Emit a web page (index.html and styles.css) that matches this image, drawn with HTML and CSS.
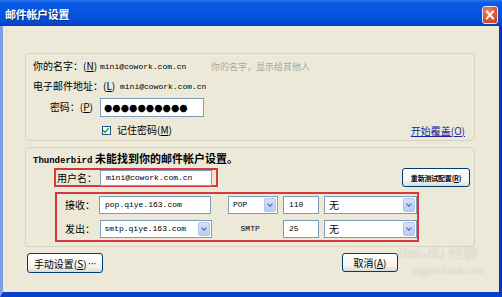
FILE: index.html
```html
<!DOCTYPE html>
<html>
<head>
<meta charset="utf-8">
<link rel="stylesheet" href="styles.css">
</head>
<body>
<div class="win">
  <div class="titlebar">
    <span class="title">邮件帐户设置</span>
    <span class="close"><svg width="15" height="18" viewBox="0 0 15 18"><path d="M4 5 L11 13 M11 5 L4 13" stroke="#fff" stroke-width="2" stroke-linecap="round"/></svg></span>
  </div>
  <div class="frame">
    <div class="client">
      <div class="group g1">
        <div class="row r1">
          <span class="lbl w67">你的名字：(<u>N</u>)</span>
          <span class="val w111">mini@cowork.com.cn</span>
          <span class="hint">你的名字，显示给其他人</span>
        </div>
        <div class="row r2">
          <span class="lbl w87">电子邮件地址：(<u>L</u>)</span>
          <span class="val">mini@cowork.com.cn</span>
        </div>
        <div class="row r3">
          <span class="lbl w60 right">密码：(<u>P</u>)</span>
          <span class="input pw">●●●●●●●●●●</span>
        </div>
        <div class="row r4">
          <span class="check"><svg width="9" height="9" viewBox="0 0 9 9"><path d="M1.5 4.5 L3.5 6.5 L7.5 2" stroke="#21a121" stroke-width="1.6" fill="none"/></svg></span>
          <span class="lbl">记住密码(<u>M</u>)</span>
          <a class="link">开始覆盖(<u>O</u>)</a>
        </div>
      </div>
      <div class="group g2">
        <div class="msg"><span class="mono">Thunderbird</span> 未能找到你的邮件帐户设置。</div>
        <div class="row r-user">
          <div class="redbox user">
            <span class="lbl w43">用户名：</span>
            <span class="input val w112">mini@cowork.com.cn</span>
          </div>
          <span class="btn retest">重新测试配置(<u>R</u>)</span>
        </div>
        <div class="redbox servers">
          <div class="srow">
            <span class="lbl w35">接收：</span>
            <span class="input val w112">pop.qiye.163.com</span>
            <span class="select val w50 ml17">POP<i class="arr"></i></span>
            <span class="input val w36 ml5">110</span>
            <span class="select w93 ml5">无<i class="arr"></i></span>
          </div>
          <div class="srow">
            <span class="lbl w35">发出：</span>
            <span class="select val w112">smtp.qiye.163.com<i class="arr"></i></span>
            <span class="val smtp">SMTP</span>
            <span class="input val w36">25</span>
            <span class="select w93 ml5">无<i class="arr"></i></span>
          </div>
        </div>
      </div>
      <div class="bottom">
        <span class="btn manual">手动设置(<u>S</u>)<span class="dots">···</span></span>
        <span class="btn cancel">取消(<u>A</u>)</span>
      </div>
    </div>
  </div>
  <div class="watermark"><span class="wm1">Bai<span class="paw">●</span>du 经验</span><span class="wm2">jingyan.baidu.com</span></div>
</div>
</body>
</html>
```
FILE: styles.css
```css
* { box-sizing: border-box; }
html, body { margin: 0; padding: 0; }
body { width: 502px; height: 297px; overflow: hidden; background: #0a3fcf; }
.win { position: relative; width: 502px; height: 297px; font-family: "Noto Sans CJK SC", "Liberation Sans", sans-serif; font-size: 10px; color: #000; }
.titlebar {
  height: 26px; display: flex; align-items: center; justify-content: space-between;
  background: linear-gradient(#2d78ef 0, #0a5ae6 3px, #0556e4 40%, #0450dc 75%, #0545cb 92%, #0a3ab8 100%);
  padding: 0 4px 0 5px;
}
.title { color: #fff; font-weight: bold; font-size: 11px; letter-spacing: -0.3px; text-shadow: 1px 1px 0 #0a2a8a; margin-top: 1px; }
.close {
  width: 16px; height: 18px; margin-top: 4px; border: 1px solid #e8e8f8; border-radius: 3px;
  background: radial-gradient(circle at 40% 30%, #f08a6a, #d8502c 60%, #c8401c);
  display: flex; align-items: center; justify-content: center;
}
.close svg { display: block; }
.frame { height: 271px; border-left: 3px solid #7d9fe6; border-right: 3px solid #0833c6; border-bottom: 5px solid #0a3fd0; background: #ece9d8; }
.client { height: 266px; padding: 27px 0 0 22px; }
.group { width: 450px; border: 1px solid #d6d3c2; border-radius: 4px; }
.g1 { height: 88px; padding: 3px 9px 0 7px; }
.g2 { height: 100px; margin-top: 6px; padding: 3px 4px 0 7px; }
.row { display: flex; align-items: center; }
.r1 { height: 18px; }
.r2 { height: 18px; margin-top: 2px; }
.r3 { height: 20px; margin-top: 2px; }
.r4 { height: 12px; margin-top: 7px; }
.lbl { white-space: nowrap; font-size: 10px; line-height: 12px; }
.lbl u, .link u, .btn u { text-decoration: underline; }
.right { text-align: right; }
.w67 { width: 67px; } .w87 { width: 87px; } .w60 { width: 60px; } .w43 { width: 43px; } .w35 { width: 35px; }
.w111 { width: 111px; } .w112 { width: 112px; } .w50 { width: 50px; } .w36 { width: 36px; } .w93 { width: 93px; }
.ml17 { margin-left: 17px; } .ml5 { margin-left: 5px; }
.val { font-family: "Liberation Mono", monospace; font-size: 8px; white-space: nowrap; }
.hint { color: #a8a8a0; font-size: 9px; }
.input { height: 18px; border: 1px solid #7f9db9; background: #fff; display: flex; align-items: center; padding-left: 5px; flex: none; }
.pw { width: 104px; height: 19px; margin-left: 7px; font-size: 9.6px; letter-spacing: 0; font-family: "DejaVu Sans", sans-serif; padding-left: 3px; overflow: hidden; white-space: nowrap; }
.check { width: 9px; height: 9px; border: 1px solid #1c5180; background: #fff; margin-left: 69px; margin-right: 6px; display: flex; }
.check svg { display: block; margin: -1px 0 0 -1px; }
.link { margin-left: auto; color: #1a2a9a; text-decoration: underline; font-size: 10px; white-space: nowrap; }
.msg { font-weight: bold; font-size: 11px; height: 14px; line-height: 14px; white-space: nowrap; }
.mono { font-family: "Liberation Mono", monospace; font-size: 9px; }
.r-user { height: 20px; margin-top: 3px; align-items: flex-start; }
.redbox { border: 2px solid #d6393c; }
.user { width: 164px; height: 19px; margin-left: 21px; display: flex; align-items: center; padding-left: 1px; }
.user .input { height: 16px; }
.servers { width: 364px; height: 50px; margin: 4px 0 0 22px; padding: 1px 0 0 8px; }
.srow { display: flex; align-items: center; height: 19px; }
.srow + .srow { margin-top: 5px; }
.select { position: relative; height: 18px; border: 1px solid #7f9db9; background: #fff; display: flex; align-items: center; padding-left: 4px; flex: none; font-size: 10px; }
.select.val { font-size: 8px; }
.arr { position: absolute; right: 1px; top: 1px; bottom: 1px; width: 12px; border-radius: 2px; background: linear-gradient(#d6e2fc, #b7cbf7); border: 1px solid #b2c5ee; }
.arr::after { content: ""; position: absolute; left: 3px; top: 3px; width: 3px; height: 3px; border-right: 1.5px solid #4d6185; border-bottom: 1.5px solid #4d6185; transform: rotate(45deg); }
.smtp { width: 72px; padding-left: 29px; }
.btn {
  display: flex; align-items: center; justify-content: center; white-space: nowrap;
  border: 1px solid #003c74; border-radius: 3px;
  background: linear-gradient(#ffffff, #f4f3ee 70%, #dcdad0);
  font-size: 10px; flex: none;
}
.btn.retest { margin-left: auto; width: 68px; height: 19px; font-size: 7px; font-weight: bold; letter-spacing: -0.2px; }
.dots { font-family: "Liberation Sans", sans-serif; font-size: 10px; letter-spacing: -0.5px; margin-left: 1px; }
.bottom { display: flex; margin-top: 6px; margin-left: 2px; }
.manual { width: 76px; height: 20px; }
.cancel { width: 56px; height: 19px; margin-left: 239px; }
.watermark { position: absolute; left: 398px; top: 244px; color: rgba(255,255,255,0.5); display: flex; flex-direction: column; align-items: flex-start; pointer-events: none; }
.wm1 { font-family: "Liberation Sans", sans-serif; font-size: 15px; line-height: 18px; text-shadow: 0 0 1px rgba(150,150,150,0.5); }
.paw { font-size: 10px; margin: 0 1px; }
.wm2 { font-family: "Liberation Sans", sans-serif; font-size: 9px; margin: 2px 0 0 14px; text-shadow: 0 0 1px rgba(150,150,150,0.5); }
```
